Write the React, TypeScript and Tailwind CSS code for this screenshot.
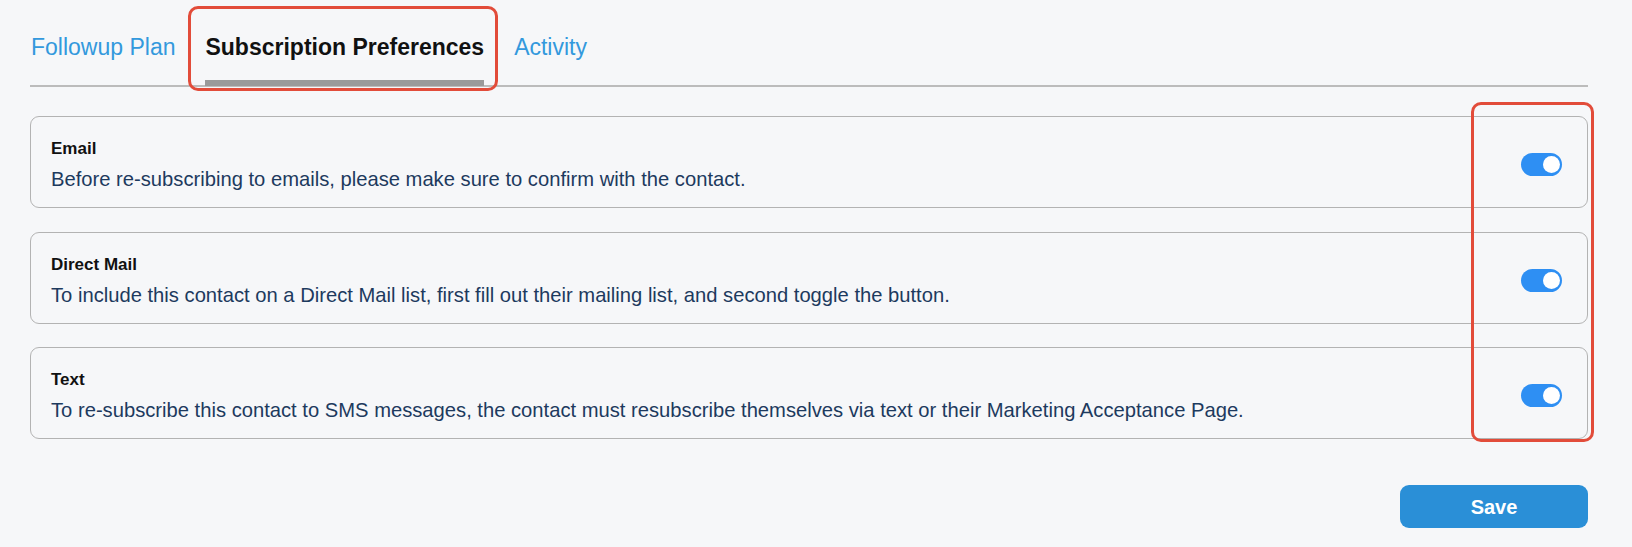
import React from "react";

const font = { fontFamily: '"Liberation Sans", Arial, Helvetica, sans-serif' };

function Toggle() {
  return (
    <div className="relative h-[23px] w-[41px] shrink-0 rounded-full bg-[#2e8ff3] mt-[5px]">
      <div className="absolute right-[2px] top-[3px] h-[17px] w-[17px] rounded-full bg-white" />
    </div>
  );
}

function Card({ title, desc }: { title: string; desc: string }) {
  return (
    <div className="flex h-[92px] items-center justify-between rounded-[9px] border border-[#b3b3b3] pl-[20px] pr-[25px]">
      <div className="flex flex-col pt-[6px]">
        <div className="text-[17px] leading-[20px] font-bold text-[#111111]">{title}</div>
        <div className="mt-[8px] text-[20.2px] leading-[24px] text-[#1d3a5e]">{desc}</div>
      </div>
      <Toggle />
    </div>
  );
}

export default function App() {
  const tabs = [
    { label: "Followup Plan", active: false },
    { label: "Subscription Preferences", active: true },
    { label: "Activity", active: false },
  ];
  return (
    <div className="relative h-[547px] w-[1632px] overflow-hidden bg-[#f6f7f9]" style={font}>
      <div className="ml-[30px] w-[1558px] pt-[33px]">
        <div className="flex gap-[30px] border-b-2 border-[#bcbcbc] pl-[1px]">
          {tabs.map((t) => (
            <div key={t.label} className="relative flex flex-col -mb-[1px]">
              <div
                className={
                  "text-[23px] leading-[28px] " +
                  (t.active ? "font-bold text-[#111111]" : "text-[#3399dd]")
                }
              >
                {t.label}
              </div>
              <div className={"mt-[19px] h-[6px] " + (t.active ? "bg-[#9a9a9a]" : "bg-transparent")} />
            </div>
          ))}
        </div>
        <div className="mt-[29px] flex flex-col gap-[23.5px]">
          <Card
            title="Email"
            desc="Before re-subscribing to emails, please make sure to confirm with the contact."
          />
          <Card
            title="Direct Mail"
            desc="To include this contact on a Direct Mail list, first fill out their mailing list, and second toggle the button."
          />
          <Card
            title="Text"
            desc="To re-subscribe this contact to SMS messages, the contact must resubscribe themselves via text or their Marketing Acceptance Page."
          />
        </div>
        <div className="mt-[46px] flex justify-end">
          <button className="h-[43px] w-[188px] rounded-[9px] bg-[#2a8fd7] text-[20px] font-bold text-white">
            Save
          </button>
        </div>
      </div>
      <div className="pointer-events-none absolute left-[188px] top-[6px] h-[85px] w-[310px] rounded-[10px] border-[3px] border-[#e24c3a]" />
      <div className="pointer-events-none absolute left-[1471px] top-[102px] h-[340px] w-[123px] rounded-[10px] border-[3px] border-[#e24c3a]" />
    </div>
  );
}
